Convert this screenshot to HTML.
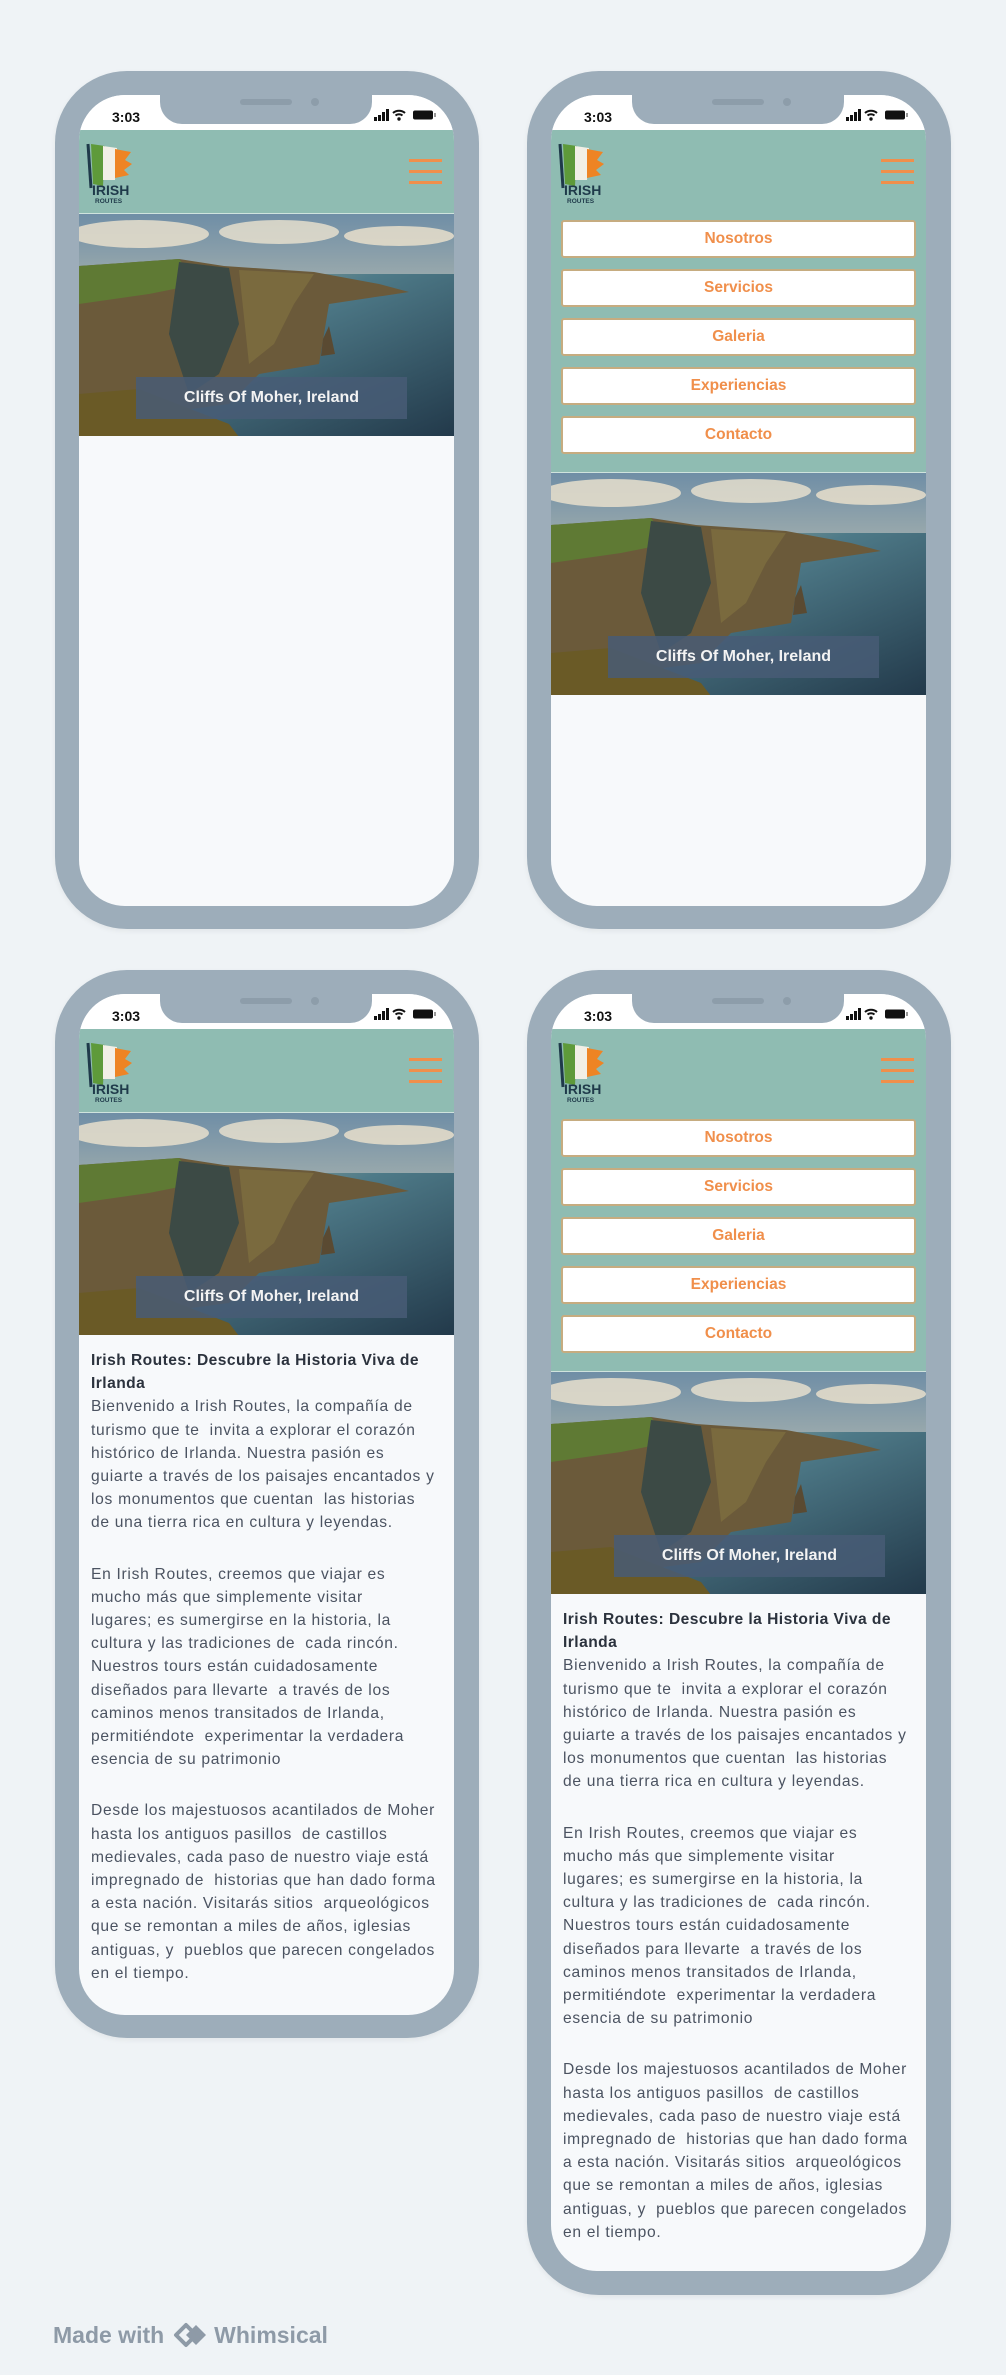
<!DOCTYPE html>
<html><head><meta charset="utf-8"><style>
*{box-sizing:border-box;margin:0;padding:0}
body{width:1006px;height:2375px;background:#eff3f6;position:relative;font-family:"Liberation Sans",sans-serif;overflow:hidden}
.phone{position:absolute;width:424px;background:#9dadba;border-radius:72px;box-shadow:0 2px 6px rgba(0,0,0,.06)}
.screen{position:absolute;left:24px;top:24px;width:375px;border-radius:46px;overflow:hidden;background:#f7f9fb}
.status{height:35px;background:#fff;position:relative}
.time{position:absolute;left:33px;top:14px;font-size:14px;font-weight:bold;color:#111}
.notch{position:absolute;left:81px;top:0;width:212px;height:29px;background:#9dadba;border-radius:0 0 22px 22px}
.notch:before{content:"";position:absolute;left:80px;top:4px;width:52px;height:6px;border-radius:3px;background:#8d9daa}
.notch:after{content:"";position:absolute;left:151px;top:3px;width:8px;height:8px;border-radius:50%;background:#8d9daa}
.icons{position:absolute;right:18px;top:14px;height:12px;width:62px}
.hdr{background:#8fbcb2;position:relative;height:83px}
.logo{position:absolute;left:6px;top:10px}
.burg{position:absolute;left:330px;top:29px;width:33px}
.burg i{display:block;height:3px;background:#f08f4b;margin-bottom:8px}
.menu{padding:7px 10px 18px 10px;background:#8fbcb2}
.menu div{height:38px;border:2px solid #c6ac80;background:#fff;border-radius:3px;color:#f08f4b;font-size:15.5px;font-weight:bold;text-align:center;line-height:34px;margin-bottom:11px}
.menu div:last-child{margin-bottom:0}
.img{position:relative;height:223px;overflow:hidden;border-top:1px solid #cfe3dd}
.cap{position:absolute;left:57px;top:163px;width:271px;height:42px;background:rgba(72,92,118,.85);color:#f3f3f3;font-weight:bold;font-size:16px;text-align:center;line-height:42px}
.txt{padding:14px 12px 0 12px;color:#4b5361;font-size:15.6px;line-height:23.2px;letter-spacing:0.7px;white-space:nowrap}
.txt b{color:#2b323d;letter-spacing:0.45px}
.txt p{margin-bottom:28px}
</style></head><body>

<div class="phone" style="left:55px;top:71px;height:858px">
<div class="screen" style="height:811px">
<div class="status"><span class="time">3:03</span><div class="notch"></div>
<svg class="icons" viewBox="0 0 62 12"><rect x="0" y="8" width="3" height="4" fill="#111"/><rect x="4" y="6" width="3" height="6" fill="#111"/><rect x="8" y="3" width="3" height="9" fill="#111"/><rect x="12" y="0" width="3" height="12" fill="#111"/><path d="M19 4a9 9 0 0 1 12 0M21.5 6.5a5.5 5.5 0 0 1 7 0" stroke="#111" stroke-width="2" fill="none"/><circle cx="25" cy="10" r="1.7" fill="#111"/><rect x="39" y="1.5" width="20" height="9" rx="2" fill="#111"/><rect x="60" y="4" width="2" height="4" fill="#999"/></svg></div>
<div class="hdr">
<svg class="logo" width="50" height="64" viewBox="0 0 50 64"><path d="M3 4 L6 48" stroke="#1f3a4a" stroke-width="3"/><path d="M6 4 L20 6 L18 46 L8 44Z" fill="#5e9a3a"/><path d="M18 6 L32 8 L30 40 L18 40Z" fill="#f2efe6"/><path d="M30 9 L46 12 L40 20 L47 24 L39 30 L44 35 L30 38Z" fill="#ee8424"/><text x="7" y="55" font-size="14" font-weight="bold" fill="#1f3a4a" font-family="Liberation Sans">IRISH</text><text x="10" y="63" font-size="6.5" font-weight="bold" fill="#1f3a4a" font-family="Liberation Sans">ROUTES</text></svg>
<div class="burg"><i></i><i></i><i></i></div></div>
<div class="img"><svg width="375" height="223" viewBox="0 0 375 223" preserveAspectRatio="none"><defs><linearGradient id="sk" x1="0" y1="0" x2="0" y2="1"><stop offset="0" stop-color="#6f8ea6"/><stop offset=".6" stop-color="#c9c7b3"/><stop offset="1" stop-color="#f4e6bd"/></linearGradient><linearGradient id="se" x1="0" y1="0" x2="1" y2="1"><stop offset="0" stop-color="#c9c9ad"/><stop offset=".4" stop-color="#4e7a88"/><stop offset="1" stop-color="#22394a"/></linearGradient></defs><rect width="375" height="223" fill="url(#sk)"/><ellipse cx="60" cy="20" rx="70" ry="14" fill="#e8dfcc" opacity=".85"/><ellipse cx="200" cy="18" rx="60" ry="12" fill="#ece3cf" opacity=".8"/><ellipse cx="320" cy="22" rx="55" ry="10" fill="#efe4cd" opacity=".8"/><rect y="60" width="375" height="163" fill="url(#se)"/><path d="M0 52 L100 45 L145 52 L235 58 L300 70 L330 78 L250 90 L240 150 L180 160 L150 190 L0 210Z" fill="#6b5a3a"/><path d="M0 52 L100 45 L120 70 L70 80 L0 90Z" fill="#5f7a34"/><path d="M100 48 L150 54 L160 110 L140 160 L110 180 L90 120Z" fill="#3c4a45"/><path d="M160 56 L235 60 L215 90 L195 130 L170 150Z" fill="#7a6a3e"/><path d="M0 180 L60 175 L150 210 L160 223 L0 223Z" fill="#6a5a26"/><path d="M244 125 L250 112 L256 140 L242 142Z" fill="#5a4a32"/></svg>
<div class="cap">Cliffs Of Moher, Ireland</div></div>
</div></div>

<div class="phone" style="left:527px;top:71px;height:858px">
<div class="screen" style="height:811px">
<div class="status"><span class="time">3:03</span><div class="notch"></div>
<svg class="icons" viewBox="0 0 62 12"><rect x="0" y="8" width="3" height="4" fill="#111"/><rect x="4" y="6" width="3" height="6" fill="#111"/><rect x="8" y="3" width="3" height="9" fill="#111"/><rect x="12" y="0" width="3" height="12" fill="#111"/><path d="M19 4a9 9 0 0 1 12 0M21.5 6.5a5.5 5.5 0 0 1 7 0" stroke="#111" stroke-width="2" fill="none"/><circle cx="25" cy="10" r="1.7" fill="#111"/><rect x="39" y="1.5" width="20" height="9" rx="2" fill="#111"/><rect x="60" y="4" width="2" height="4" fill="#999"/></svg></div>
<div class="hdr">
<svg class="logo" width="50" height="64" viewBox="0 0 50 64"><path d="M3 4 L6 48" stroke="#1f3a4a" stroke-width="3"/><path d="M6 4 L20 6 L18 46 L8 44Z" fill="#5e9a3a"/><path d="M18 6 L32 8 L30 40 L18 40Z" fill="#f2efe6"/><path d="M30 9 L46 12 L40 20 L47 24 L39 30 L44 35 L30 38Z" fill="#ee8424"/><text x="7" y="55" font-size="14" font-weight="bold" fill="#1f3a4a" font-family="Liberation Sans">IRISH</text><text x="10" y="63" font-size="6.5" font-weight="bold" fill="#1f3a4a" font-family="Liberation Sans">ROUTES</text></svg>
<div class="burg"><i></i><i></i><i></i></div></div>
<div class="menu"><div>Nosotros</div><div>Servicios</div><div>Galeria</div><div>Experiencias</div><div>Contacto</div></div>
<div class="img"><svg width="375" height="223" viewBox="0 0 375 223" preserveAspectRatio="none"><rect width="375" height="223" fill="url(#sk)"/><ellipse cx="60" cy="20" rx="70" ry="14" fill="#e8dfcc" opacity=".85"/><ellipse cx="200" cy="18" rx="60" ry="12" fill="#ece3cf" opacity=".8"/><ellipse cx="320" cy="22" rx="55" ry="10" fill="#efe4cd" opacity=".8"/><rect y="60" width="375" height="163" fill="url(#se)"/><path d="M0 52 L100 45 L145 52 L235 58 L300 70 L330 78 L250 90 L240 150 L180 160 L150 190 L0 210Z" fill="#6b5a3a"/><path d="M0 52 L100 45 L120 70 L70 80 L0 90Z" fill="#5f7a34"/><path d="M100 48 L150 54 L160 110 L140 160 L110 180 L90 120Z" fill="#3c4a45"/><path d="M160 56 L235 60 L215 90 L195 130 L170 150Z" fill="#7a6a3e"/><path d="M0 180 L60 175 L150 210 L160 223 L0 223Z" fill="#6a5a26"/><path d="M244 125 L250 112 L256 140 L242 142Z" fill="#5a4a32"/></svg>
<div class="cap">Cliffs Of Moher, Ireland</div></div>
</div></div>

<div class="phone" style="left:55px;top:970px;height:1068px">
<div class="screen" style="height:1021px">
<div class="status"><span class="time">3:03</span><div class="notch"></div>
<svg class="icons" viewBox="0 0 62 12"><rect x="0" y="8" width="3" height="4" fill="#111"/><rect x="4" y="6" width="3" height="6" fill="#111"/><rect x="8" y="3" width="3" height="9" fill="#111"/><rect x="12" y="0" width="3" height="12" fill="#111"/><path d="M19 4a9 9 0 0 1 12 0M21.5 6.5a5.5 5.5 0 0 1 7 0" stroke="#111" stroke-width="2" fill="none"/><circle cx="25" cy="10" r="1.7" fill="#111"/><rect x="39" y="1.5" width="20" height="9" rx="2" fill="#111"/><rect x="60" y="4" width="2" height="4" fill="#999"/></svg></div>
<div class="hdr">
<svg class="logo" width="50" height="64" viewBox="0 0 50 64"><path d="M3 4 L6 48" stroke="#1f3a4a" stroke-width="3"/><path d="M6 4 L20 6 L18 46 L8 44Z" fill="#5e9a3a"/><path d="M18 6 L32 8 L30 40 L18 40Z" fill="#f2efe6"/><path d="M30 9 L46 12 L40 20 L47 24 L39 30 L44 35 L30 38Z" fill="#ee8424"/><text x="7" y="55" font-size="14" font-weight="bold" fill="#1f3a4a" font-family="Liberation Sans">IRISH</text><text x="10" y="63" font-size="6.5" font-weight="bold" fill="#1f3a4a" font-family="Liberation Sans">ROUTES</text></svg>
<div class="burg"><i></i><i></i><i></i></div></div>
<div class="img"><svg width="375" height="223" viewBox="0 0 375 223" preserveAspectRatio="none"><rect width="375" height="223" fill="url(#sk)"/><ellipse cx="60" cy="20" rx="70" ry="14" fill="#e8dfcc" opacity=".85"/><ellipse cx="200" cy="18" rx="60" ry="12" fill="#ece3cf" opacity=".8"/><ellipse cx="320" cy="22" rx="55" ry="10" fill="#efe4cd" opacity=".8"/><rect y="60" width="375" height="163" fill="url(#se)"/><path d="M0 52 L100 45 L145 52 L235 58 L300 70 L330 78 L250 90 L240 150 L180 160 L150 190 L0 210Z" fill="#6b5a3a"/><path d="M0 52 L100 45 L120 70 L70 80 L0 90Z" fill="#5f7a34"/><path d="M100 48 L150 54 L160 110 L140 160 L110 180 L90 120Z" fill="#3c4a45"/><path d="M160 56 L235 60 L215 90 L195 130 L170 150Z" fill="#7a6a3e"/><path d="M0 180 L60 175 L150 210 L160 223 L0 223Z" fill="#6a5a26"/><path d="M244 125 L250 112 L256 140 L242 142Z" fill="#5a4a32"/></svg>
<div class="cap">Cliffs Of Moher, Ireland</div></div>
<div class="txt">
<p><b>Irish Routes: Descubre la Historia Viva de<br>Irlanda</b><br>Bienvenido a Irish Routes, la compañía de<br>turismo que te&nbsp; invita a explorar el corazón<br>histórico de Irlanda. Nuestra pasión es<br>guiarte a través de los paisajes encantados y<br>los monumentos que cuentan&nbsp; las historias<br>de una tierra rica en cultura y leyendas.</p>
<p>En Irish Routes, creemos que viajar es<br>mucho más que simplemente visitar<br>lugares; es sumergirse en la historia, la<br>cultura y las tradiciones de&nbsp; cada rincón.<br>Nuestros tours están cuidadosamente<br>diseñados para llevarte&nbsp; a través de los<br>caminos menos transitados de Irlanda,<br>permitiéndote&nbsp; experimentar la verdadera<br>esencia de su patrimonio</p>
<p>Desde los majestuosos acantilados de Moher<br>hasta los antiguos pasillos&nbsp; de castillos<br>medievales, cada paso de nuestro viaje está<br>impregnado de&nbsp; historias que han dado forma<br>a esta nación. Visitarás sitios&nbsp; arqueológicos<br>que se remontan a miles de años, iglesias<br>antiguas, y&nbsp; pueblos que parecen congelados<br>en el tiempo.</p>
</div>
</div></div>

<div class="phone" style="left:527px;top:970px;height:1325px">
<div class="screen" style="height:1277px">
<div class="status"><span class="time">3:03</span><div class="notch"></div>
<svg class="icons" viewBox="0 0 62 12"><rect x="0" y="8" width="3" height="4" fill="#111"/><rect x="4" y="6" width="3" height="6" fill="#111"/><rect x="8" y="3" width="3" height="9" fill="#111"/><rect x="12" y="0" width="3" height="12" fill="#111"/><path d="M19 4a9 9 0 0 1 12 0M21.5 6.5a5.5 5.5 0 0 1 7 0" stroke="#111" stroke-width="2" fill="none"/><circle cx="25" cy="10" r="1.7" fill="#111"/><rect x="39" y="1.5" width="20" height="9" rx="2" fill="#111"/><rect x="60" y="4" width="2" height="4" fill="#999"/></svg></div>
<div class="hdr">
<svg class="logo" width="50" height="64" viewBox="0 0 50 64"><path d="M3 4 L6 48" stroke="#1f3a4a" stroke-width="3"/><path d="M6 4 L20 6 L18 46 L8 44Z" fill="#5e9a3a"/><path d="M18 6 L32 8 L30 40 L18 40Z" fill="#f2efe6"/><path d="M30 9 L46 12 L40 20 L47 24 L39 30 L44 35 L30 38Z" fill="#ee8424"/><text x="7" y="55" font-size="14" font-weight="bold" fill="#1f3a4a" font-family="Liberation Sans">IRISH</text><text x="10" y="63" font-size="6.5" font-weight="bold" fill="#1f3a4a" font-family="Liberation Sans">ROUTES</text></svg>
<div class="burg"><i></i><i></i><i></i></div></div>
<div class="menu"><div>Nosotros</div><div>Servicios</div><div>Galeria</div><div>Experiencias</div><div>Contacto</div></div>
<div class="img"><svg width="375" height="223" viewBox="0 0 375 223" preserveAspectRatio="none"><rect width="375" height="223" fill="url(#sk)"/><ellipse cx="60" cy="20" rx="70" ry="14" fill="#e8dfcc" opacity=".85"/><ellipse cx="200" cy="18" rx="60" ry="12" fill="#ece3cf" opacity=".8"/><ellipse cx="320" cy="22" rx="55" ry="10" fill="#efe4cd" opacity=".8"/><rect y="60" width="375" height="163" fill="url(#se)"/><path d="M0 52 L100 45 L145 52 L235 58 L300 70 L330 78 L250 90 L240 150 L180 160 L150 190 L0 210Z" fill="#6b5a3a"/><path d="M0 52 L100 45 L120 70 L70 80 L0 90Z" fill="#5f7a34"/><path d="M100 48 L150 54 L160 110 L140 160 L110 180 L90 120Z" fill="#3c4a45"/><path d="M160 56 L235 60 L215 90 L195 130 L170 150Z" fill="#7a6a3e"/><path d="M0 180 L60 175 L150 210 L160 223 L0 223Z" fill="#6a5a26"/><path d="M244 125 L250 112 L256 140 L242 142Z" fill="#5a4a32"/></svg>
<div class="cap" style="left:63px">Cliffs Of Moher, Ireland</div></div>
<div class="txt">
<p><b>Irish Routes: Descubre la Historia Viva de<br>Irlanda</b><br>Bienvenido a Irish Routes, la compañía de<br>turismo que te&nbsp; invita a explorar el corazón<br>histórico de Irlanda. Nuestra pasión es<br>guiarte a través de los paisajes encantados y<br>los monumentos que cuentan&nbsp; las historias<br>de una tierra rica en cultura y leyendas.</p>
<p>En Irish Routes, creemos que viajar es<br>mucho más que simplemente visitar<br>lugares; es sumergirse en la historia, la<br>cultura y las tradiciones de&nbsp; cada rincón.<br>Nuestros tours están cuidadosamente<br>diseñados para llevarte&nbsp; a través de los<br>caminos menos transitados de Irlanda,<br>permitiéndote&nbsp; experimentar la verdadera<br>esencia de su patrimonio</p>
<p>Desde los majestuosos acantilados de Moher<br>hasta los antiguos pasillos&nbsp; de castillos<br>medievales, cada paso de nuestro viaje está<br>impregnado de&nbsp; historias que han dado forma<br>a esta nación. Visitarás sitios&nbsp; arqueológicos<br>que se remontan a miles de años, iglesias<br>antiguas, y&nbsp; pueblos que parecen congelados<br>en el tiempo.</p>
</div>
</div></div>

<div style="position:absolute;left:53px;top:2320px;height:30px;display:flex;align-items:center;color:#8e9aa7;font-size:23px;font-weight:bold">
<span>Made with</span>
<svg width="38" height="28" viewBox="0 0 38 28" style="margin:0 4px 0 8px"><path d="M4 14 L14 4 L24 14 L14 24Z" fill="none" stroke="#8e9aa7" stroke-width="4" stroke-linejoin="round"/><path d="M14 14 L24 4 L34 14 L24 24Z" fill="#8e9aa7"/></svg>
<span>Whimsical</span></div>
</body></html>
